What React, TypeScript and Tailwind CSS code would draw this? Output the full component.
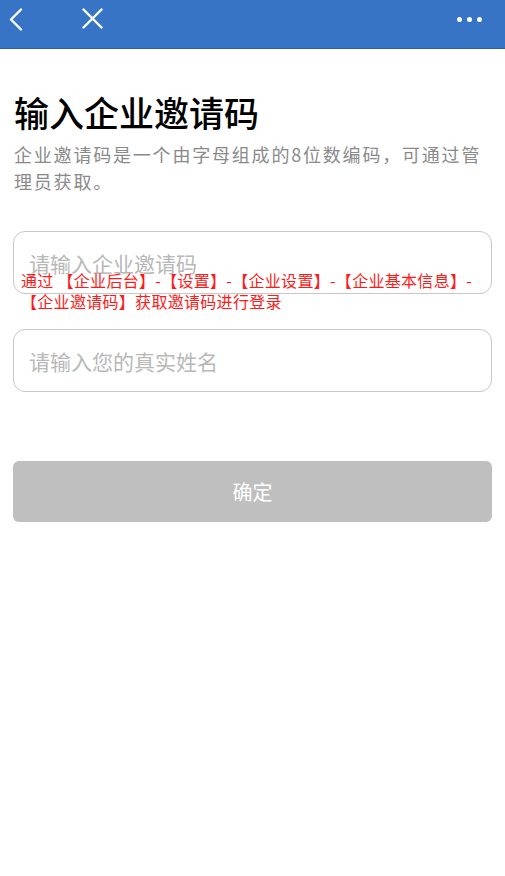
const font = { fontFamily: '"Noto Sans CJK SC", "Noto Sans", sans-serif' }

const Header = () => (
  <header className="h-[49px] w-full bg-[#3874c6] border-b border-[#2c5ea3] flex items-center relative">
    <svg className="absolute left-[8px] top-[8px]" width="16" height="23" viewBox="0 0 16 23" fill="none">
      <path d="M13 1.5 L3 11.5 L13 21.5" stroke="white" strokeWidth="2.4" strokeLinecap="round" strokeLinejoin="round" />
    </svg>
    <svg className="absolute left-[82px] top-[8px]" width="21" height="21" viewBox="0 0 21 21" fill="none">
      <path d="M1.5 1.5 L19.5 19.5 M19.5 1.5 L1.5 19.5" stroke="white" strokeWidth="2.4" strokeLinecap="round" />
    </svg>
    <div className="absolute left-[457px] top-[17px] flex gap-[5px]">
      <span className="w-[5px] h-[5px] rounded-full bg-white" />
      <span className="w-[5px] h-[5px] rounded-full bg-white" />
      <span className="w-[5px] h-[5px] rounded-full bg-white" />
    </div>
  </header>
)

export default function App() {
  return (
    <div className="w-[505px] h-[876px] bg-white overflow-hidden" style={font}>
      <Header />
      <main className="px-[13px]">
        <h1 className="mt-[39px] pl-[1px] text-[35px] leading-[48px] font-medium text-black">
          输入企业邀请码
        </h1>
        <p className="mt-[5px] pl-[1px] text-[18px] leading-[27px] tracking-[1.8px] text-[#8a8a8a]">
          企业邀请码是一个由字母组成的8位数编码，可通过管理员获取。
        </p>
        <div className="relative mt-[36px]">
          <input
            className="w-full h-[63px] rounded-[12px] border border-[#c8c8c8] px-[15px] text-[21px] outline-none placeholder:text-[#b8b8b8]"
            placeholder="请输入企业邀请码"
          />
          <div className="absolute left-[8px] top-[39px] right-0 text-[16px] leading-[21px] tracking-[0.3px] text-[#ff1a1a]">
            通过 【企业后台】-【设置】-【企业设置】-【企业基本信息】-
            <br />
            【企业邀请码】获取邀请码进行登录
          </div>
        </div>
        <input
          className="mt-[35px] w-full h-[63px] rounded-[12px] border border-[#c8c8c8] px-[15px] text-[21px] outline-none placeholder:text-[#b8b8b8]"
          placeholder="请输入您的真实姓名"
        />
        <button className="mt-[69px] w-full h-[61px] rounded-[6px] bg-[#bfbfbf] text-white text-[20px]">
          确定
        </button>
      </main>
    </div>
  )
}
